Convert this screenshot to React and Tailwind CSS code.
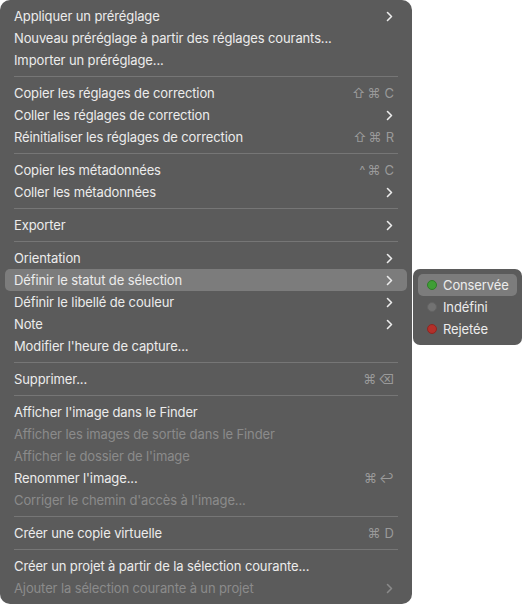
import React from "react"

const sections = [
  [
    { label: "Appliquer un préréglage", sub: true },
    { label: "Nouveau préréglage à partir des réglages courants..." },
    { label: "Importer un préréglage..." },
  ],
  [
    { label: "Copier les réglages de correction", keys: "⇧⌘", key: "C" },
    { label: "Coller les réglages de correction", sub: true },
    { label: "Réinitialiser les réglages de correction", keys: "⇧⌘", key: "R" },
  ],
  [
    { label: "Copier les métadonnées", keys: "^⌘", key: "C" },
    { label: "Coller les métadonnées", sub: true },
  ],
  [{ label: "Exporter", sub: true }],
  [
    { label: "Orientation", sub: true },
    { label: "Définir le statut de sélection", sub: true, active: true },
    { label: "Définir le libellé de couleur", sub: true },
    { label: "Note", sub: true },
    { label: "Modifier l'heure de capture..." },
  ],
  [{ label: "Supprimer...", keys: "⌘⌫" }],
  [
    { label: "Afficher l'image dans le Finder" },
    { label: "Afficher les images de sortie dans le Finder", disabled: true },
    { label: "Afficher le dossier de l'image", disabled: true },
    { label: "Renommer l'image...", keys: "⌘↩" },
    { label: "Corriger le chemin d'accès à l'image...", disabled: true },
  ],
  [{ label: "Créer une copie virtuelle", keys: "⌘", key: "D" }],
  [
    { label: "Créer un projet à partir de la sélection courante..." },
    { label: "Ajouter la sélection courante à un projet", sub: true, disabled: true },
  ],
]

function Chevron({ dim }) {
  return (
    <svg width="7" height="11" viewBox="0 0 7 11" className="mr-[1px]">
      <path
        d="M1.5 1.5 L5.5 5.5 L1.5 9.5"
        fill="none"
        stroke={dim ? "#8a8a8a" : "#ececec"}
        strokeWidth="1.6"
        strokeLinecap="round"
        strokeLinejoin="round"
      />
    </svg>
  )
}

function Row({ item }) {
  return (
    <div
      className={
        "h-[22px] mx-[5px] pl-[9px] pr-[13px] flex items-center justify-between rounded-[5px] " +
        (item.active ? "bg-[#7c7c7c]" : "")
      }
    >
      <span
        className={
          "tracking-[-0.12px] " + (item.disabled ? "text-[#8b8b8b]" : "text-[#ececec]")
        }
      >
        {item.label}
      </span>
      {item.sub && <Chevron dim={item.disabled} />}
      {item.keys && (
        <span className={"text-[#9a9a9a] flex items-center " + (item.key ? "" : "mr-[-2px]")}>
          <span className="tracking-[2px]">{item.keys}</span>
          {item.key && <span className="ml-[2px]">{item.key}</span>}
        </span>
      )}
    </div>
  )
}

const choix = [
  { label: "Conservée", dot: "bg-[#3f9e36] border-[#2f7d28]", active: true },
  { label: "Indéfini", dot: "bg-[#727272] border-[#636363]" },
  { label: "Rejetée", dot: "bg-[#b3302a] border-[#8f2520]" },
]

export default function App() {
  return (
    <div
      className="w-[523px] h-[604px] bg-white flex items-start text-[13px] leading-none"
      style={{ fontFamily: "Inter, 'Noto Sans', sans-serif" }}
    >
      {/* MENU PRINCIPAL */}
      <div className="w-[412px] h-[604px] bg-[#5b5b5b] rounded-[10px] py-[5px] flex flex-col">
        {sections.map((sec, i) => (
          <div key={i}>
            {i > 0 && (
              <div className="h-[11px] flex items-center px-[14px]">
                <div className="h-px w-full bg-[#767676]" />
              </div>
            )}
            {sec.map((item) => (
              <Row key={item.label} item={item} />
            ))}
          </div>
        ))}
      </div>

      {/* SOUS-MENU */}
      <div className="mt-[269px] ml-[1px] w-[109px] bg-[#5b5b5b] rounded-[7px] py-[5px]">
        {choix.map((c) => (
          <div
            key={c.label}
            className={
              "h-[22px] mx-[5px] pl-[9px] flex items-center gap-[6px] rounded-[5px] " +
              (c.active ? "bg-[#7c7c7c]" : "")
            }
          >
            <span className={"w-[10px] h-[10px] rounded-full border " + c.dot} />
            <span className="text-[#ececec] tracking-[-0.12px]">{c.label}</span>
          </div>
        ))}
      </div>
    </div>
  )
}
